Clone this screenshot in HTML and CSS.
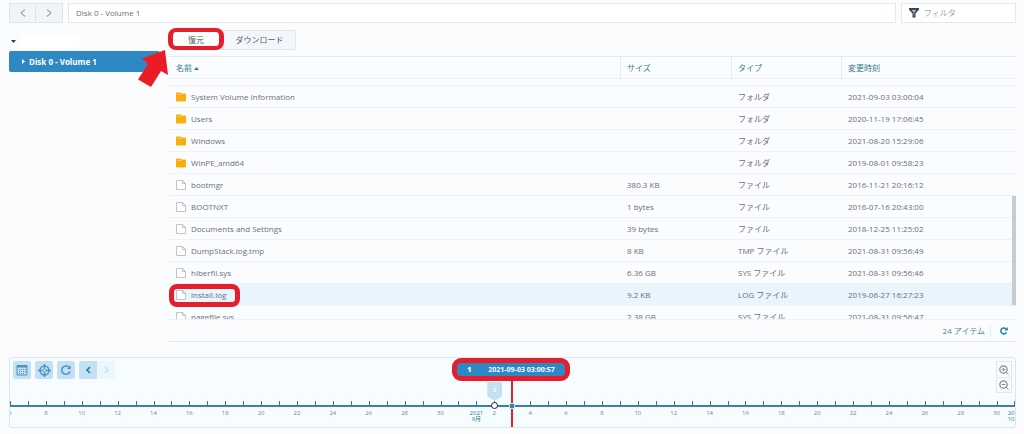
FILE: index.html
```html
<!DOCTYPE html>
<html lang="ja">
<head>
<meta charset="utf-8">
<title>Disk 0 - Volume 1</title>
<link rel="stylesheet" href="styles.css">
</head>
<body>
<header class="topbar">
  <div class="history">
    <button type="button" aria-label="戻る"><svg width="6" height="8" viewBox="0 0 6 8"><path d="M5 .5 1 4l4 3.500"/></svg></button>
    <button type="button" aria-label="進む"><svg width="6" height="8" viewBox="0 0 6 8"><path d="M1 .5 5 4 1 7.500"/></svg></button>
  </div>
  <input class="address" type="text" aria-label="パス" value="Disk 0 - Volume 1">
  <label class="filter">
    <svg width="10" height="10" viewBox="0 0 10 10"><path fill="#3c4654" d="M0 0h10v1.800L6.500 5.500V9.500H3.500V5.500L0 1.800z"/><path d="M2.600 1.900h4.800L5.300 4.200v3.200h-.6V4.200z" fill="#b9c0c8"/></svg>
    <input type="text" placeholder="フィルタ" aria-label="フィルタ">
  </label>
</header>

<div class="content">
  <nav class="sidebar">
    <div class="tree-root"><svg width="5" height="3" viewBox="0 0 5 3"><path fill="#333b44" d="M0 0h5L2.500 3z"/></svg><span class="root-name"></span></div>
    <a class="tree-node" href="#"><svg width="3" height="5" viewBox="0 0 3 5"><path fill="#fff" d="M0 0v5l3-2.500z"/></svg>Disk 0 - Volume 1</a>
  </nav>

  <main class="main">
    <div class="actions">
      <button type="button" class="restore">復元<span class="callout"></span></button>
      <button type="button" class="download">ダウンロード</button>
      <svg class="arrow" width="30" height="38" viewBox="0 0 30 38"><path fill="#ec1c24" d="M27 1 30 26l-7-4-10 16L0 30.500 10 15l-6-5.500z"/></svg>
    </div>
    <div class="list">
      <table>
        <colgroup><col><col class="c-size"><col class="c-type"><col class="c-date"></colgroup>
        <thead><tr><th>名前 <svg width="5" height="3" viewBox="0 0 5 3"><path fill="#2f7f93" d="M0 3h5L2.500 0z"/></svg></th><th>サイズ</th><th>タイプ</th><th>変更時刻</th></tr></thead>
        <tbody>
          <tr class="scrolled"><td colspan="4"></td></tr>
          <tr><td><span class="file"><svg class="ico"><use href="#folder"/></svg>System Volume Information</span></td><td></td><td>フォルダ</td><td>2021-09-03 03:00:04</td></tr>
          <tr><td><span class="file"><svg class="ico"><use href="#folder"/></svg>Users</span></td><td></td><td>フォルダ</td><td>2020-11-19 17:06:45</td></tr>
          <tr><td><span class="file"><svg class="ico"><use href="#folder"/></svg>Windows</span></td><td></td><td>フォルダ</td><td>2021-08-20 15:29:06</td></tr>
          <tr><td><span class="file"><svg class="ico"><use href="#folder"/></svg>WinPE_amd64</span></td><td></td><td>フォルダ</td><td>2019-08-01 09:58:23</td></tr>
          <tr><td><span class="file"><svg class="ico"><use href="#page"/></svg>bootmgr</span></td><td>380.3 KB</td><td>ファイル</td><td>2016-11-21 20:16:12</td></tr>
          <tr><td><span class="file"><svg class="ico"><use href="#page"/></svg>BOOTNXT</span></td><td>1 bytes</td><td>ファイル</td><td>2016-07-16 20:43:00</td></tr>
          <tr><td><span class="file"><svg class="ico"><use href="#page"/></svg>Documents and Settings</span></td><td>39 bytes</td><td>ファイル</td><td>2018-12-25 11:25:02</td></tr>
          <tr><td><span class="file"><svg class="ico"><use href="#page"/></svg>DumpStack.log.tmp</span></td><td>8 KB</td><td>TMP ファイル</td><td>2021-08-31 09:56:49</td></tr>
          <tr><td><span class="file"><svg class="ico"><use href="#page"/></svg>hiberfil.sys</span></td><td>6.36 GB</td><td>SYS ファイル</td><td>2021-08-31 09:56:46</td></tr>
          <tr class="selected"><td><span class="file"><svg class="ico"><use href="#page"/></svg>install.log<span class="callout"></span></span></td><td>9.2 KB</td><td>LOG ファイル</td><td>2019-06-27 16:27:23</td></tr>
          <tr><td><span class="file"><svg class="ico"><use href="#page"/></svg>pagefile.sys</span></td><td>2.38 GB</td><td>SYS ファイル</td><td>2021-08-31 09:56:47</td></tr>
        </tbody>
      </table>
      <div class="thumb"></div>
    </div>
    <footer class="status">
      <span class="count">24 アイテム</span>
      <button type="button" aria-label="更新"><svg width="8" height="8" viewBox="0 0 8 8"><path d="M6.500 5.300A3 3 0 1 1 6.200 2" fill="none" stroke="#2280b0" stroke-width="1.500"/><path d="M7.800 0v3.400H4.400z" fill="#2280b0"/></svg></button>
    </footer>
  </main>
</div>

<section class="timeline">
  <div class="tools">
    <button type="button" aria-label="カレンダー"><svg width="12" height="12" viewBox="0 0 12 12" fill="none" stroke="#4a93c0"><path d="M1 1.500h10v9.500H1z"/><path d="M1 2.500h10" stroke-width="2"/><path d="M3 5.500h7M3 7.500h7M3 9.500h5" stroke-dasharray="1 1"/></svg></button>
    <button type="button" aria-label="現在位置"><svg width="13" height="13" viewBox="0 0 13 13" fill="none" stroke="#4a93c0"><circle cx="6.500" cy="6.500" r="4.500" stroke-width="1.400"/><circle cx="6.500" cy="6.500" r="1.800"/><path d="M6.500 0v4M6.500 9v4M0 6.500h4M9 6.500h4" stroke-width="1.400"/></svg></button>
    <button type="button" aria-label="再読み込み"><svg width="12" height="12" viewBox="0 0 12 12"><path d="M10 7.200A4.200 4.200 0 1 1 8.800 3" fill="none" stroke="#4a93c0" stroke-width="1.500"/><path d="M10.700 1.200v3.800H6.900z" fill="#4a93c0"/></svg></button>
    <div class="pager">
      <button type="button" aria-label="前へ"><svg width="5" height="8" viewBox="0 0 5 8"><path d="M4 1 1 4l3 3" fill="none" stroke="#2c78aa" stroke-width="1.600"/></svg></button>
      <button type="button" class="off" aria-label="次へ" disabled><svg width="5" height="8" viewBox="0 0 5 8"><path d="M1 1l3 3-3 3" fill="none" stroke="#c3dcea" stroke-width="1.200"/></svg></button>
    </div>
    <div class="zoom">
      <button type="button" aria-label="拡大"><svg width="10" height="10" viewBox="0 0 10 10" fill="none" stroke="#858c93"><circle cx="4.500" cy="4.500" r="3.700" stroke-width="1.200"/><path d="M7 7l2.500 2.500M2.700 4.500h3.600M4.500 2.700v3.600"/></svg></button>
      <button type="button" aria-label="縮小"><svg width="10" height="10" viewBox="0 0 10 10" fill="none" stroke="#858c93"><circle cx="4.500" cy="4.500" r="3.700" stroke-width="1.200"/><path d="M7 7l2.500 2.500M2.700 4.500h3.600"/></svg></button>
    </div>
  </div>
  <ol class="axis">
    <li><span>6</span></li><li></li><li><span>8</span></li><li></li><li><span>10</span></li><li></li><li><span>12</span></li><li></li><li><span>14</span></li><li></li><li><span>16</span></li><li></li><li><span>18</span></li><li></li><li><span>20</span></li><li></li><li><span>22</span></li><li></li><li><span>24</span></li><li></li><li><span>26</span></li><li></li><li><span>28</span></li><li></li><li><span>30</span></li><li></li>
    <li class="month"><span>2021<br>9月</span></li>
    <li><span>2</span><div class="pin">3</div><div class="dot"></div></li>
    <li><div class="cursor"></div><div class="handle"></div><div class="current"><b>1</b><time>2021-09-03 03:00:57</time></div></li>
    <li><span>4</span></li><li></li><li><span>6</span></li><li></li><li><span>8</span></li><li></li><li><span>10</span></li><li></li><li><span>12</span></li><li></li><li><span>14</span></li><li></li><li><span>16</span></li><li></li><li><span>18</span></li><li></li><li><span>20</span></li><li></li><li><span>22</span></li><li></li><li><span>24</span></li><li></li><li><span>26</span></li><li></li><li><span>28</span></li><li></li><li><span>30</span></li>
    <li class="month last"><span>20<br>10</span></li>
  </ol>
</section>

<svg class="sprite" width="0" height="0">
  <symbol id="folder" viewBox="0 0 10 10"><path fill="#f9ae10" d="M0 1.500q0-1 1-1h3.500l1 1H9q1 0 1 1v6q0 1-1 1H1q-1 0-1-1z"/><path d="M1 2.500h5" stroke="#fdd27a" stroke-width=".7"/></symbol>
  <symbol id="page" viewBox="0 0 10 10"><path d="M.5.5h6L9.500 3.500v6h-9zM6.500.5v3h3" fill="#fff" stroke="#aeb5bc" stroke-width=".8"/></symbol>
</svg>
</body>
</html>
```
FILE: styles.css
```css
* { box-sizing: border-box; }

body {
  margin: 0;
  height: 100vh;
  padding: 3px 8px 6px 9px;
  display: flex;
  flex-direction: column;
  background: #fbfcfe;
  color: #6a7077;
  font: 8px/12px "Open Sans", "Noto Sans CJK JP", sans-serif;
  overflow: hidden;
}

button, input { font: inherit; color: inherit; }
button {
  display: flex;
  align-items: center;
  justify-content: center;
  padding: 0;
  border: 0;
  background: none;
}
svg { display: block; flex: none; }
.sprite { position: absolute; }

.topbar { display: flex; gap: 5px; height: 20px; }
.history { display: flex; }
.history button {
  width: 27px;
  background: #f1f4f9;
  border: 1px solid #e0e4ea;
}
.history button + button { border-left: 0; }
.history path { fill: none; stroke: #a4abb3; stroke-width: 1.2; }
.address, .filter {
  border: 1px solid #e4e7ec;
  background: #fff;
  min-width: 0;
}
.address { flex: 1; padding: 0 7px; }
.filter {
  display: flex;
  align-items: center;
  gap: 5px;
  width: 115px;
  padding: 0 7px;
}
.filter input {
  flex: 1;
  min-width: 0;
  padding: 0;
  border: 0;
  background: none;
}
.filter input::placeholder { color: #a0a5ab; }

.content {
  flex: 1;
  min-height: 0;
  display: flex;
  gap: 9px;
}
.sidebar { width: 151px; padding-top: 11px; }
.tree-root {
  display: flex;
  align-items: center;
  gap: 5px;
  height: 14px;
  margin-bottom: 3px;
  padding-left: 2px;
}
.root-name { width: 58px; height: 14px; background: #fff; }
.tree-node {
  display: flex;
  align-items: center;
  gap: 4px;
  height: 21px;
  padding-left: 13px;
  border-radius: 2px;
  background: #2d88c4;
  color: #fff;
  font-weight: 700;
  text-decoration: none;
}

.main {
  flex: 1;
  min-width: 0;
  display: flex;
  flex-direction: column;
  padding-top: 7px;
}
.actions { position: relative; display: flex; height: 26px; }
.actions button {
  height: 20px;
  background: #f3f6fa;
  border: 1px solid #e4e8ed;
  color: #555c64;
}
.actions .restore { position: relative; width: 54px; background: #fdfdfe; }
.actions .download { width: 73px; }
.callout {
  position: absolute;
  border: 5px solid #e41e2b;
  border-radius: 8px;
}
.restore .callout { inset: -3px -2px -1px; border-width: 4px 5px; }
.arrow { position: absolute; left: -31px; top: 19px; }

.list {
  position: relative;
  flex: 1;
  min-height: 0;
  overflow: hidden;
  border-top: 1px solid #e6eaee;
}
table { width: 100%; table-layout: fixed; border-collapse: separate; border-spacing: 0; }
.c-size { width: 111px; }
.c-type { width: 110px; }
.c-date { width: 175px; }
th, td {
  height: 22px;
  padding: 0 0 0 7px;
  border-bottom: 1px solid #eef1f5;
  text-align: left;
  white-space: nowrap;
}
th { color: #2f7f93; font-weight: 400; }
th + th { border-left: 1px solid #e6eaee; padding-left: 6px; }
th svg { display: inline-block; vertical-align: middle; }
.scrolled td { height: 7px; }
.file { position: relative; display: flex; align-items: center; gap: 5px; }
.ico { width: 10px; height: 10px; }
.selected td { background: #e9f4fd; }
.file .callout { left: -7px; top: -5px; width: 71px; height: 23px; }
.thumb {
  position: absolute;
  right: 0;
  top: 139px;
  width: 4px;
  height: 109px;
  background: #c7ccd1;
}
.status {
  display: flex;
  align-items: center;
  justify-content: flex-end;
  height: 23px;
  border-top: 1px solid #eef1f5;
  border-bottom: 1px solid #e2e6eb;
  color: #4f8799;
}
.count { padding-right: 5px; border-right: 1px solid #e8ebef; }
.status button { width: 25px; height: 16px; }

.timeline {
  position: relative;
  margin-top: 15px;
  height: 71px;
  padding: 3px 0 0;
  border: 1px solid #dde5e9;
  border-radius: 3px;
  background: #f6fcff;
  overflow: hidden;
}
.tools {
  display: flex;
  align-items: flex-start;
  gap: 4px;
  height: 40px;
  padding: 0 3px;
}
.tools button {
  width: 18px;
  height: 18px;
  border-radius: 2px;
  background: #c3e1f3;
}
.pager { display: flex; }
.tools .pager button { border-radius: 2px 0 0 2px; }
.tools .pager .off { border-radius: 0 2px 2px 0; background: #ecf6fc; }
.zoom { margin-left: auto; border: 1px solid #e2e7eb; }
.tools .zoom button { width: 14px; height: 15px; background: #f8fbfd; border-radius: 0; }
.tools .zoom button + button { border-top: 1px solid #e2e7eb; }

.axis {
  display: flex;
  justify-content: space-between;
  margin: 0;
  padding: 0;
  height: 6px;
  border-bottom: 2px solid #3a7fac;
  list-style: none;
  font-size: 6px;
  line-height: 6px;
  color: #7c838a;
}
.axis li {
  position: relative;
  width: 0;
  display: flex;
  justify-content: center;
}
.axis li::before {
  content: "";
  position: absolute;
  left: 0;
  top: 0;
  width: 1px;
  height: 4px;
  background: #3f6f8d;
}
.axis span { flex: none; padding-top: 9px; text-align: center; }
.axis .month { color: #2f7f93; }
.axis .last { justify-content: flex-end; }
.axis .last::before { left: -1px; }
.dot {
  position: absolute;
  left: -3px;
  top: 1px;
  width: 7px;
  height: 7px;
  border: 1px solid #222;
  border-radius: 50%;
  background: #fff;
}
.pin {
  position: absolute;
  left: -7px;
  top: -19px;
  width: 15px;
  height: 19px;
  padding-top: 5px;
  background: #c3e1f3;
  clip-path: polygon(0 0, 100% 0, 100% 75%, 50% 100%, 0 75%);
  color: #fff;
  font-weight: 700;
  text-align: center;
}
.cursor {
  position: absolute;
  left: -1px;
  top: -44px;
  width: 2px;
  height: 71px;
  background: #e41e2b;
}
.handle {
  position: absolute;
  left: -3px;
  top: 2px;
  width: 6px;
  height: 6px;
  border: 1px solid #cfe6f5;
  background: #3a7fac;
}
.current {
  position: absolute;
  left: -60px;
  top: -43px;
  width: 118px;
  height: 23px;
  display: flex;
  align-items: center;
  gap: 17px;
  padding-left: 10px;
  border: 5px solid #e41e2b;
  border-radius: 9px;
  background: #2d88c4;
  color: #fff;
  font-size: 7px;
  font-weight: 700;
  white-space: nowrap;
}
```
